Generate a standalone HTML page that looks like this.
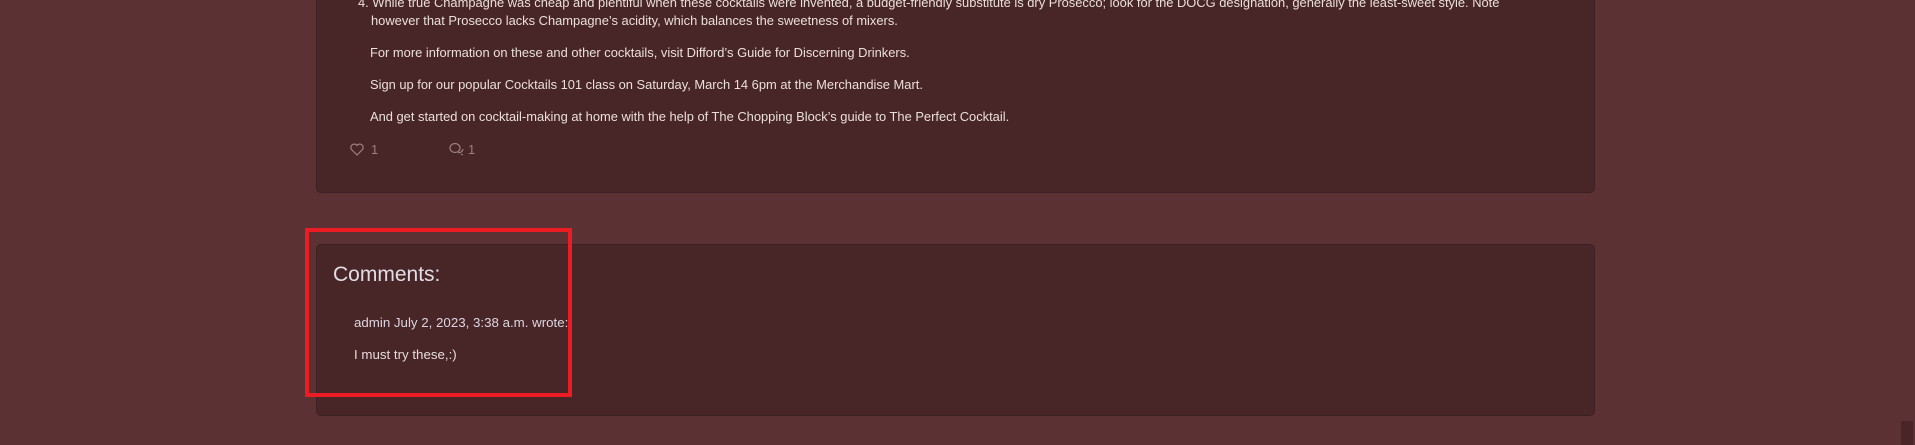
<!DOCTYPE html>
<html><head><style>
body{margin:0;width:1915px;height:445px;background:#5b3133;font-family:"Liberation Sans",sans-serif;color:#eadfd9;position:relative;overflow:hidden}
.card{position:absolute;left:316px;width:1279px;background:#482628;border:1px solid #3f2022;border-radius:5px;box-sizing:border-box}
.t{position:absolute;font-size:12.9px;white-space:nowrap;line-height:16px}
</style></head><body>
<div class="card" style="top:-10px;height:203px"></div>
<div class="t" style="left:358px;top:-5px">4. While true Champagne was cheap and plentiful when these cocktails were invented, a budget-friendly substitute is dry Prosecco; look for the DOCG designation, generally the least-sweet style. Note</div>
<div class="t" style="left:371px;top:13px">however that Prosecco lacks Champagne’s acidity, which balances the sweetness of mixers.</div>
<div class="t" style="left:370px;top:45px">For more information on these and other cocktails, visit Difford’s Guide for Discerning Drinkers.</div>
<div class="t" style="left:370px;top:77px">Sign up for our popular Cocktails 101 class on Saturday, March 14 6pm at the Merchandise Mart.</div>
<div class="t" style="left:370px;top:109px">And get started on cocktail-making at home with the help of The Chopping Block’s guide to The Perfect Cocktail.</div>
<svg style="position:absolute;left:350px;top:143px" width="14" height="13" viewBox="0 0 14 13"><path d="M7 12L1.5 6.5A3 3 0 0 1 7 2.5A3 3 0 0 1 12.5 6.5Z" fill="none" stroke="#9c7f80" stroke-width="1.2"/></svg>
<div class="t" style="left:371px;top:142px;color:#9c7f80">1</div>
<svg style="position:absolute;left:449px;top:142px" width="16" height="14" viewBox="0 0 16 14"><ellipse cx="6" cy="6" rx="5" ry="4.5" fill="none" stroke="#9c7f80" stroke-width="1.2"/><path d="M9 10.5A4 4 0 0 0 14 7M12 12l2 1" fill="none" stroke="#9c7f80" stroke-width="1.2"/></svg>
<div class="t" style="left:468px;top:142px;color:#9c7f80">1</div>
<div class="card" style="top:244px;height:172px"></div>
<div class="t" style="left:333px;top:263px;font-size:21px;line-height:24px;color:#e2dde4">Comments:</div>
<div class="t" style="left:354px;top:315px;font-size:13.3px;color:#dcd6e0">admin July 2, 2023, 3:38 a.m. wrote:</div>
<div class="t" style="left:354px;top:347px;font-size:13.3px;color:#e8dcd8">I must try these,:)</div>
<div style="position:absolute;left:305px;top:228px;width:267px;height:169px;border:4px solid #ec1c24;box-sizing:border-box"></div>
<div style="position:absolute;left:1901px;top:421px;width:12px;height:24px;background:#4a2527"></div>
</body></html>
